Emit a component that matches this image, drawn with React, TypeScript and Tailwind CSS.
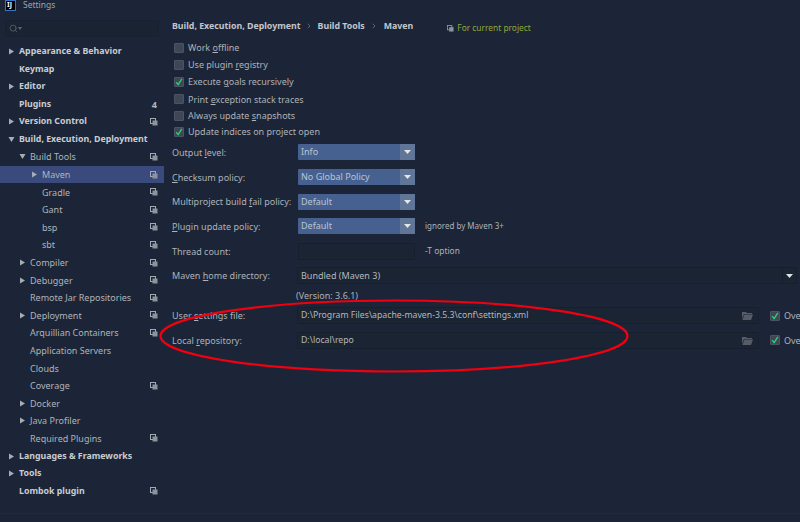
import { Search, ChevronRight } from "lucide-react";

type Node = { label: string; depth: number; arrow?: "right" | "down"; bold?: boolean; copy?: boolean; badge?: string; selected?: boolean };

const tree: Node[] = [
  { label: "Appearance & Behavior", depth: 0, arrow: "right", bold: true },
  { label: "Keymap", depth: 0, bold: true },
  { label: "Editor", depth: 0, arrow: "right", bold: true },
  { label: "Plugins", depth: 0, bold: true, badge: "4" },
  { label: "Version Control", depth: 0, arrow: "right", bold: true, copy: true },
  { label: "Build, Execution, Deployment", depth: 0, arrow: "down", bold: true },
  { label: "Build Tools", depth: 1, arrow: "down", copy: true },
  { label: "Maven", depth: 2, arrow: "right", copy: true, selected: true },
  { label: "Gradle", depth: 2, copy: true },
  { label: "Gant", depth: 2, copy: true },
  { label: "bsp", depth: 2, copy: true },
  { label: "sbt", depth: 2, copy: true },
  { label: "Compiler", depth: 1, arrow: "right", copy: true },
  { label: "Debugger", depth: 1, arrow: "right", copy: true },
  { label: "Remote Jar Repositories", depth: 1, copy: true },
  { label: "Deployment", depth: 1, arrow: "right", copy: true },
  { label: "Arquillian Containers", depth: 1, copy: true },
  { label: "Application Servers", depth: 1 },
  { label: "Clouds", depth: 1 },
  { label: "Coverage", depth: 1, copy: true },
  { label: "Docker", depth: 1, arrow: "right" },
  { label: "Java Profiler", depth: 1, arrow: "right" },
  { label: "Required Plugins", depth: 1, copy: true },
  { label: "Languages & Frameworks", depth: 0, arrow: "right", bold: true },
  { label: "Tools", depth: 0, arrow: "right", bold: true },
  { label: "Lombok plugin", depth: 0, bold: true, copy: true },
];

function CopyIcon() {
  return (
    <svg width="8" height="8" viewBox="0 0 8 8" className="shrink-0">
      <rect x="0.5" y="0.5" width="5" height="5" fill="none" stroke="#a3a9b3" strokeWidth="1" />
      <rect x="2.5" y="2.5" width="5" height="5" fill="#8d939d" />
    </svg>
  );
}

function Arrow({ dir }: { dir: "right" | "down" }) {
  return (
    <svg width="7" height="7" viewBox="0 0 7 7" className="shrink-0">
      <path d={dir === "right" ? "M1 0.5 L6 3.5 L1 6.5 Z" : "M0.5 1 L6.5 1 L3.5 6 Z"} fill="#a7adb6" />
    </svg>
  );
}

function TreeRow({ node }: { node: Node }) {
  const indent = node.depth === 0 ? "pl-[8px]" : node.depth === 1 ? "pl-[19px]" : "pl-[31px]";
  return (
    <div className={`flex items-center h-[17.6px] pr-[6px] ${indent} ${node.selected ? "bg-[#3a4a7d]" : ""}`}>
      <div className="w-[11px] shrink-0 flex items-center">{node.arrow && <Arrow dir={node.arrow} />}</div>
      <span className={`flex-1 whitespace-nowrap ${node.bold ? "font-bold text-[8.8px] text-[#c9ccd1]" : "text-[#b0b4ba]"}`}>{node.label}</span>
      {node.copy && <CopyIcon />}
      {node.badge && <span className="text-[#b4b8be] font-bold mr-[1px]">{node.badge}</span>}
    </div>
  );
}

function Check({ on }: { on?: boolean }) {
  return (
    <div className="w-[10px] h-[10px] shrink-0 rounded-[1px] bg-[#3f4655] border border-[#4c5361] flex items-center justify-center">
      {on && (
        <svg width="8" height="8" viewBox="0 0 8 8">
          <path d="M1.2 4.2 L3.2 6.6 L6.8 0.8" fill="none" stroke="#2ecc71" strokeWidth="1.4" />
        </svg>
      )}
    </div>
  );
}

function CheckRow({ on, h, children }: { on?: boolean; h: string; children: React.ReactNode }) {
  return (
    <div className={`flex items-center gap-[4px] ${h}`}>
      <Check on={on} />
      <span className="text-[#aeb2b8] whitespace-nowrap">{children}</span>
    </div>
  );
}

function Combo({ label, value, note, h }: { label: React.ReactNode; value: string; note?: string; h: string }) {
  return (
    <div className={`flex items-center ${h}`}>
      <span className="w-[126px] shrink-0 text-[#aeb2b8] whitespace-nowrap">{label}</span>
      <div className="w-[117px] h-[16px] flex rounded-[1px] bg-[#46618f] shrink-0">
        <span className="flex-1 pl-[3px] leading-[16px] text-[#bcc4d2]">{value}</span>
        <div className="w-[15px] bg-[#5f7698] flex items-center justify-center">
          <svg width="7" height="4" viewBox="0 0 7 4">
            <path d="M0 0 H7 L3.5 4 Z" fill="#e3e6ea" />
          </svg>
        </div>
      </div>
      {note && <span className="ml-[10px] text-[8px] text-[#aeb2b8] whitespace-nowrap">{note}</span>}
    </div>
  );
}

function FolderIcon() {
  return (
    <svg width="11" height="9" viewBox="0 0 11 9" className="shrink-0">
      <path d="M0 1 H4 L5 2 H10 V3 H2 L0 8 Z" fill="#565d69" />
      <path d="M2.4 3.6 H11 L9 9 H0.4 Z" fill="#565d69" />
    </svg>
  );
}

function PathRow({ label, value, h }: { label: React.ReactNode; value: string; h: string }) {
  return (
    <div className={`flex items-center ${h}`}>
      <span className="w-[125px] shrink-0 text-[#aeb2b8] whitespace-nowrap">{label}</span>
      <div className="w-[462px] h-[17px] shrink-0 flex items-center pl-[3px] pr-[5px] border border-[#161f2d] bg-[#1a2433]">
        <span className="flex-1 text-[8.7px] text-[#b4b8be] whitespace-nowrap">{value}</span>
        <FolderIcon />
      </div>
      <div className="ml-[11px] flex items-center gap-[4px]">
        <Check on />
        <span className="text-[#aeb2b8]">Ove</span>
      </div>
    </div>
  );
}

export default function App() {
  return (
    <div className="relative w-[800px] h-[522px] overflow-hidden bg-[#1b2537] flex flex-col text-[9px] leading-none" style={{ fontFamily: '"Noto Sans", sans-serif' }}>
      <div className="h-[13px] shrink-0 flex items-center pl-[5px] gap-[7px]">
        <div className="w-[11px] h-[11px] self-start bg-black border border-[#3b73c4] text-white text-[7px] font-bold leading-[7px] pl-[1px]">IJ</div>
        <span className="text-[8.5px] text-[#9fa4ac] -mt-[2px]">Settings</span>
      </div>
      <div className="flex flex-1 min-h-0">
        <div className="w-[164px] shrink-0 flex flex-col">
          <div className="mx-[5px] mt-[7px] h-[17px] shrink-0 border border-[#18212f] bg-[#1a2332] flex items-center pl-[3px]">
            <Search size={9} color="#5d6572" />
            <svg width="4" height="3" viewBox="0 0 4 3"><path d="M0 0 H4 L2 3 Z" fill="#5d6572" /></svg>
          </div>
          <div className="mt-[5.6px]">
            {tree.map((n) => (
              <TreeRow key={n.label} node={n} />
            ))}
          </div>
        </div>
        <div className="flex-1 min-w-0 pl-[8px] pt-[3px] flex flex-col">
          <div className="h-[20px] flex items-center text-[8.8px]">
            <span className="font-bold text-[#c3c6cc]">Build, Execution, Deployment</span>
            <ChevronRight size={8} color="#7d838d" className="mx-[4.5px]" />
            <span className="font-bold text-[#c3c6cc]">Build Tools</span>
            <ChevronRight size={8} color="#7d838d" className="ml-[5px] mr-[6px]" />
            <span className="font-bold text-[#c3c6cc]">Maven</span>
            <span className="ml-[34px] text-[8.4px] text-[#8fa83c] flex items-center gap-[3px] mt-[5px]">
              <svg width="7" height="7" viewBox="0 0 8 8"><rect x="0.5" y="0.5" width="5" height="5" fill="none" stroke="#8d939d" /><rect x="2.5" y="2.5" width="5" height="5" fill="#8d939d" /></svg>
              For current project
            </span>
          </div>
          <div className="mt-[3px] pl-[2px]">
            <CheckRow h="h-[17px]">Work <u>o</u>ffline</CheckRow>
            <CheckRow h="h-[17px]">Use plugin <u>r</u>egistry</CheckRow>
            <CheckRow h="h-[17.5px]" on>Execute <u>g</u>oals recursively</CheckRow>
            <CheckRow h="h-[17px]">Print <u>e</u>xception stack traces</CheckRow>
            <CheckRow h="h-[16px]">Always update <u>s</u>napshots</CheckRow>
            <CheckRow h="h-[16.5px]" on>Update indices on project open</CheckRow>
          </div>
          <div>
            <Combo h="h-[24.7px]" label={<>Output <u>l</u>evel:</>} value="Info" />
            <Combo h="h-[24.7px]" label={<><u>C</u>hecksum policy:</>} value="No Global Policy" />
            <Combo h="h-[24.7px]" label={<>Multiproject build <u>f</u>ail policy:</>} value="Default" />
            <Combo h="h-[24.7px]" label={<><u>P</u>lugin update policy:</>} value="Default" note="ignored by Maven 3+" />
          </div>
          <div className="flex items-center h-[24.5px]">
            <span className="w-[126px] shrink-0 text-[#aeb2b8]">Thread count:</span>
            <div className="w-[117px] h-[17px] shrink-0 border border-[#161f2d] bg-[#1a2433]" />
            <span className="ml-[10px] text-[8.4px] text-[#aeb2b8]">-T option</span>
          </div>
          <div className="flex items-center h-[24.5px]">
            <span className="w-[125px] shrink-0 text-[#aeb2b8]">Maven <u>h</u>ome directory:</span>
            <div className="w-[500px] h-[17px] shrink-0 flex border border-[#161f2d] bg-[#1a2433]">
              <span className="flex-1 pl-[3px] leading-[15px] text-[#b4b8be]">Bundled (Maven 3)</span>
              <div className="w-[14px] border-l border-[#161f2d] flex items-center justify-center">
                <svg width="7" height="4" viewBox="0 0 7 4"><path d="M0 0 H7 L3.5 4 Z" fill="#dfe2e6" /></svg>
              </div>
            </div>
          </div>
          <div className="h-[15.5px] pl-[124px] flex items-center text-[#aeb2b8]">(Version: 3.6.1)</div>
          <PathRow h="h-[24.5px]" label={<>User <u>s</u>ettings file:</>} value="D:\Program Files\apache-maven-3.5.3\conf\settings.xml" />
          <PathRow h="h-[24.5px]" label={<>Local <u>r</u>epository:</>} value="D:\local\repo" />
        </div>
      </div>
      <div className="h-[9px] shrink-0 border-t border-[#202b3d]" />
      <svg className="absolute left-0 top-0 pointer-events-none" width="800" height="522">
        <ellipse cx="394" cy="336" rx="233.5" ry="35.5" fill="none" stroke="#f00010" strokeWidth="2.2" />
      </svg>
    </div>
  );
}
